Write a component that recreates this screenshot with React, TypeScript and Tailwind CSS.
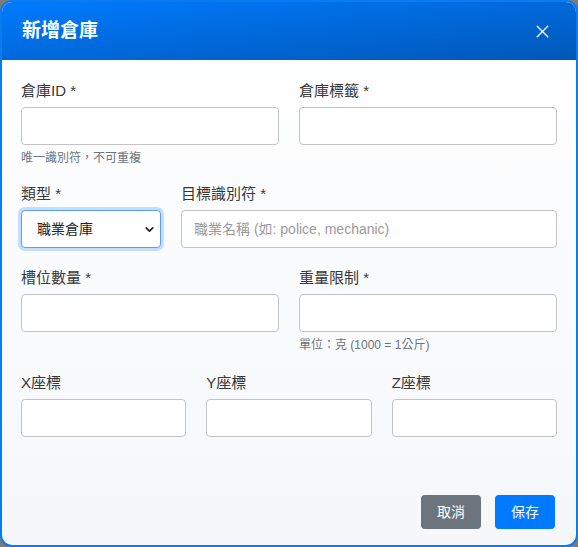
import React from 'react';
import { ChevronDown, X } from 'lucide-react';

const font = { fontFamily: '"Liberation Sans", "Noto Sans CJK TC", sans-serif' };

const Label: React.FC<{ text: string }> = ({ text }) => (
  <label className="block text-[15px] leading-[22px] text-[#383838] mb-[5px]">{text}</label>
);

const Input: React.FC<{ placeholder?: string }> = ({ placeholder }) => (
  <input
    type="text"
    placeholder={placeholder}
    className="block w-full h-[38px] rounded-[4px] border border-[#c4c4c4] bg-white px-[12px] text-[14px] text-[#333] placeholder:text-[#9a9a9a] outline-none"
  />
);

const Help: React.FC<{ text: string }> = ({ text }) => (
  <p className="mt-[5px] text-[12px] leading-[16px] text-[#6c757d]">{text}</p>
);

export default function App() {
  return (
    <div className="w-[578px] h-[547px] bg-[#7b7b7b]" style={font}>
      <div className="flex h-full flex-col overflow-hidden rounded-[12px] border-2 border-[#0a7bf0] bg-gradient-to-b from-white to-[#f5f7fa]">
        {/* Header */}
        <div className="flex h-[58px] shrink-0 items-center justify-between bg-gradient-to-br from-[#007bff] to-[#0058b8] pl-[20px] pr-[23px]">
          <h2 className="text-[19px] font-bold text-white">新增倉庫</h2>
          <button className="text-white">
            <X size={21} strokeWidth={1.6} />
          </button>
        </div>

        {/* Body */}
        <div className="flex-1 px-[19px] pt-[20px]">
          <div className="grid grid-cols-2 gap-x-[20px]">
            <div>
              <Label text="倉庫ID *" />
              <Input />
              <Help text="唯一識別符，不可重複" />
            </div>
            <div>
              <Label text="倉庫標籤 *" />
              <Input />
            </div>
          </div>

          <div className="mt-[17px] grid grid-cols-[140px_1fr] gap-x-[20px]">
            <div>
              <Label text="類型 *" />
              <div className="relative">
                <select className="block w-full h-[38px] appearance-none rounded-[4px] border border-[#5a9ff5] bg-white pl-[15px] text-[14px] text-[#222] outline-none shadow-[0_0_0_3px_rgba(0,123,255,0.22)]">
                  <option>職業倉庫</option>
                </select>
                <ChevronDown
                  size={13}
                  strokeWidth={3.2}
                  className="pointer-events-none absolute right-[5px] top-[13px] text-[#222]"
                />
              </div>
            </div>
            <div>
              <Label text="目標識別符 *" />
              <Input placeholder="職業名稱 (如: police, mechanic)" />
            </div>
          </div>

          <div className="mt-[19px] grid grid-cols-2 gap-x-[20px]">
            <div>
              <Label text="槽位數量 *" />
              <Input />
            </div>
            <div>
              <Label text="重量限制 *" />
              <Input />
              <Help text="單位：克 (1000 = 1公斤)" />
            </div>
          </div>

          <div className="mt-[19px] grid grid-cols-3 gap-x-[20px]">
            <div>
              <Label text="X座標" />
              <Input />
            </div>
            <div>
              <Label text="Y座標" />
              <Input />
            </div>
            <div>
              <Label text="Z座標" />
              <Input />
            </div>
          </div>
        </div>

        {/* Footer */}
        <div className="flex justify-end gap-[14px] pb-[16px] pr-[21px]">
          <button className="h-[34px] w-[60px] rounded-[4px] bg-[#6c757d] text-[14px] text-white">取消</button>
          <button className="h-[34px] w-[60px] rounded-[4px] bg-[#007bff] text-[14px] text-white">保存</button>
        </div>
      </div>
    </div>
  );
}
